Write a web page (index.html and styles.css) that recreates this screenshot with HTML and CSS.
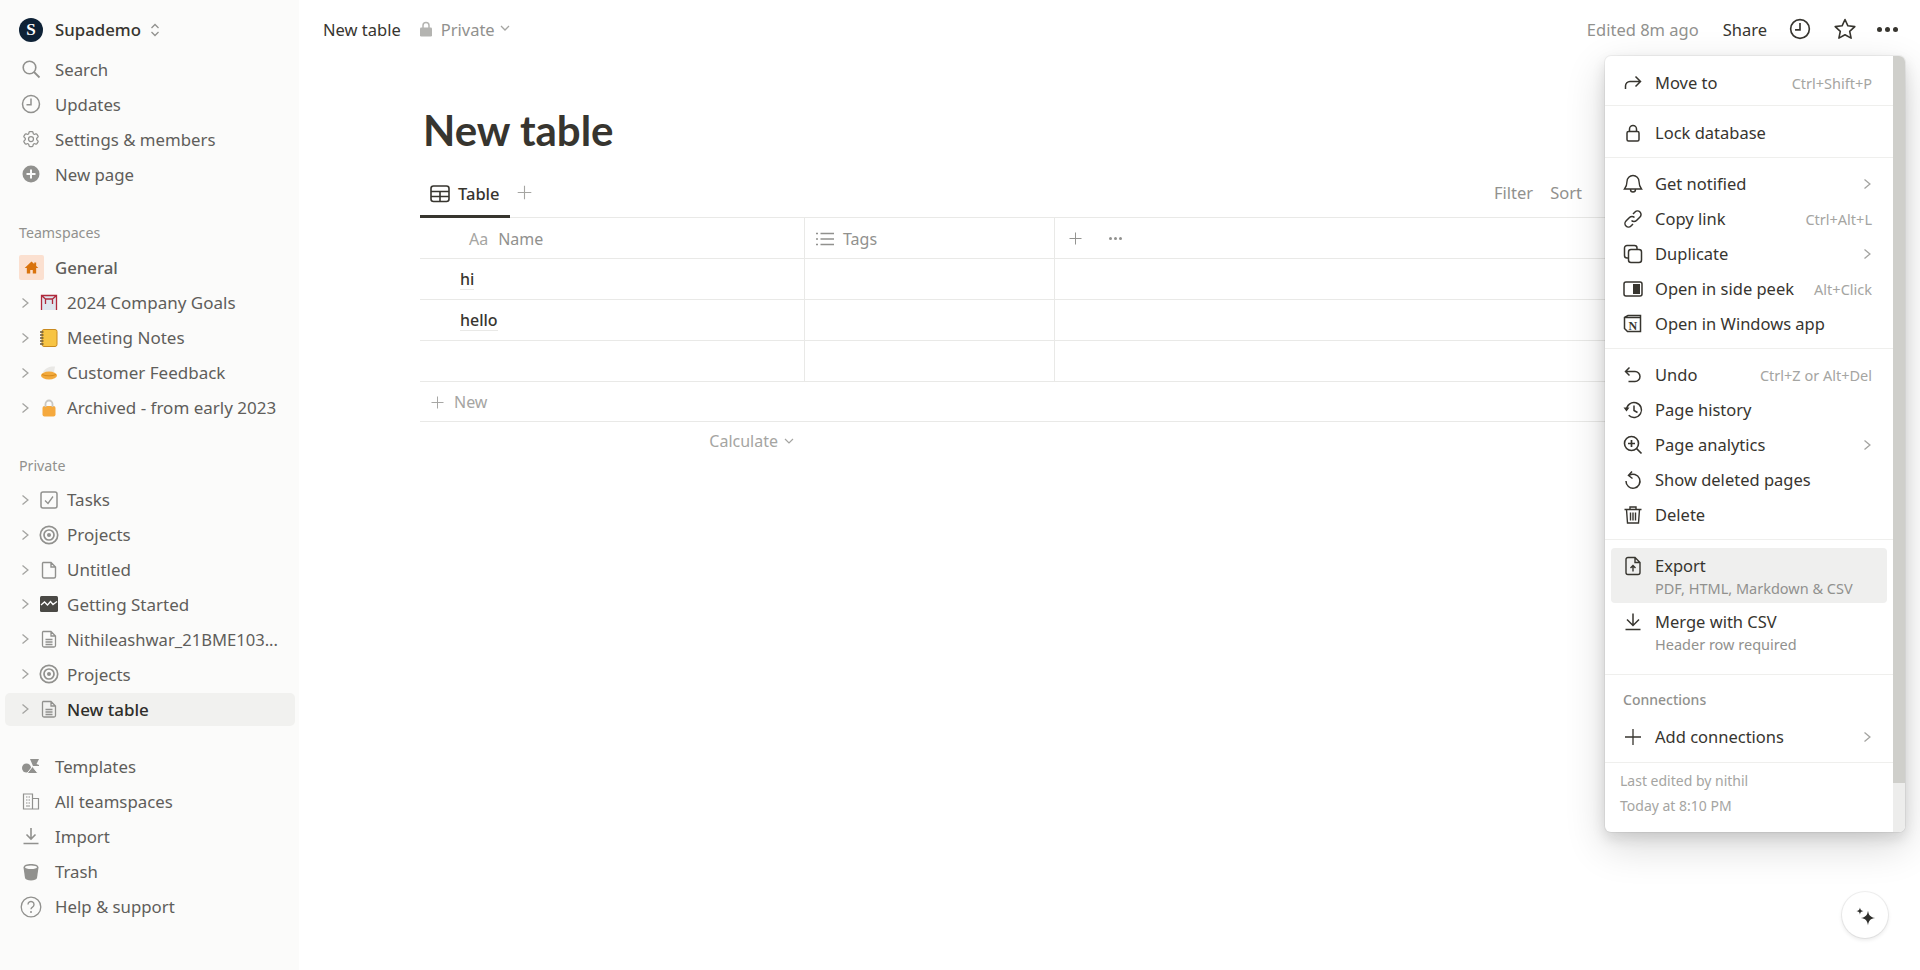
FILE: index.html
```html
<!DOCTYPE html>
<html lang="en">
<head>
<meta charset="utf-8">
<title>New table</title>
<link rel="stylesheet" href="styles.css">
</head>
<body>
<svg class="defs" width="0" height="0" aria-hidden="true">
  <symbol id="chev" viewBox="0 0 12 16"><path d="M3 2.500 9.500 8 3 13.500" fill="none" stroke="currentColor" stroke-width="1.600"/></symbol>
  <symbol id="doc" viewBox="0 0 20 20"><path d="M4 2.500h8l4.500 4.500v9.500a1.500 1.500 0 0 1-1.500 1.500H5a1.500 1.500 0 0 1-1.500-1.500V3.500a1 1 0 0 1 .5-1Zm8 0V7h4.500" fill="none" stroke="currentColor" stroke-width="1.400"/></symbol>
  <symbol id="doclines" viewBox="0 0 20 20"><path d="M4 2.500h8l4.500 4.500v9.500a1.500 1.500 0 0 1-1.500 1.500H5a1.500 1.500 0 0 1-1.500-1.500V3.500a1 1 0 0 1 .5-1Zm8 0V7h4.500M6.500 10.500h7M6.500 13h7M6.500 15.500h7" fill="none" stroke="currentColor" stroke-width="1.300"/></symbol>
  <symbol id="target" viewBox="0 0 20 20"><circle cx="10" cy="10" r="8.700" fill="none" stroke="currentColor" stroke-width="1.700"/><circle cx="10" cy="10" r="5" fill="none" stroke="currentColor" stroke-width="1.700"/><circle cx="10" cy="10" r="2"  fill="currentColor"/></symbol>
  <symbol id="clock" viewBox="0 0 20 20"><circle cx="10" cy="10" r="8.500" fill="none" stroke="currentColor" stroke-width="1.500"/><path d="M10 4.500V10.800H5.500" fill="none" stroke="currentColor" stroke-width="1.500"/></symbol>
  <symbol id="plus" viewBox="0 0 20 20"><path d="M10 2v16M2 10h16" fill="none" stroke="currentColor" stroke-width="1.300"/></symbol>
</svg>

<div class="app">
  <aside class="sidebar">
    <div class="workspace">
      <span class="avatar">S</span>
      <span class="workspace-name">Supademo</span>
      <svg class="updown" viewBox="0 0 10 16"><path d="M1.500 6 5 2.500 8.500 6M1.500 10 5 13.500 8.500 10" fill="none" stroke="currentColor" stroke-width="1.300"/></svg>
    </div>
    <nav class="nav">
      <div class="row"><svg class="ico" viewBox="0 0 20 20"><circle cx="8.500" cy="8.500" r="6.300" fill="none" stroke="currentColor" stroke-width="1.600"/><path d="m13 13 5.500 5.500" stroke="currentColor" stroke-width="1.800"/></svg><span>Search</span></div>
      <div class="row"><svg class="ico"><use href="#clock"/></svg><span>Updates</span></div>
      <div class="row"><svg class="ico" viewBox="0 0 24 24"><path fill="none" stroke="currentColor" stroke-width="1.500" d="M9.594 3.940c.09-.542.56-.94 1.110-.94h2.593c.55 0 1.020.398 1.110.94l.213 1.281c.063.374.313.686.645.870.074.040.147.083.220.127.325.196.720.257 1.075.124l1.217-.456a1.125 1.125 0 0 1 1.370.490l1.296 2.247a1.125 1.125 0 0 1-.260 1.431l-1.003.827c-.293.241-.438.613-.430.992a7.723 7.723 0 0 1 0 .255c-.008.378.137.750.430.991l1.004.827c.424.350.534.955.260 1.430l-1.298 2.247a1.125 1.125 0 0 1-1.369.491l-1.217-.456c-.355-.133-.750-.072-1.076.124a6.470 6.470 0 0 1-.220.128c-.331.183-.581.495-.644.869l-.213 1.281c-.09.543-.56.940-1.110.940h-2.594c-.55 0-1.019-.398-1.110-.940l-.213-1.281c-.062-.374-.312-.686-.644-.870a6.520 6.520 0 0 1-.220-.127c-.325-.196-.720-.257-1.076-.124l-1.217.456a1.125 1.125 0 0 1-1.369-.490l-1.297-2.247a1.125 1.125 0 0 1 .260-1.431l1.004-.827c.292-.240.437-.613.430-.991a6.932 6.932 0 0 1 0-.255c.007-.380-.138-.751-.430-.992l-1.004-.827a1.125 1.125 0 0 1-.260-1.430l1.297-2.247a1.125 1.125 0 0 1 1.370-.491l1.216.456c.356.133.751.072 1.076-.124.072-.044.146-.086.220-.128.332-.183.582-.495.644-.869l.214-1.280Z"/><circle cx="12" cy="12" r="3" fill="none" stroke="currentColor" stroke-width="1.500"/></svg><span>Settings &amp; members</span></div>
      <div class="row"><svg class="ico" viewBox="0 0 20 20"><circle cx="10" cy="10" r="8.500" fill="currentColor"/><path d="M10 5.500v9M5.500 10h9" stroke="#fbfbfa" stroke-width="2"/></svg><span>New page</span></div>
    </nav>

    <div class="label label-team">Teamspaces</div>
    <nav class="nav">
      <div class="row row-strong"><span class="home"><svg viewBox="0 0 20 20"><path d="M10 3 2 10.500h2.500V17h4v-4h3v4h4v-6.500H18l-2.500-2.400V4h-2.300v1.900Z" fill="#d9730d"/></svg></span><span>General</span></div>
      <div class="row tree"><svg class="chev"><use href="#chev"/></svg><svg class="tico" viewBox="0 0 20 20"><path d="M3 3h14v14H3z" fill="#dfe6ee"/><path d="M2.500 17V2.500h15V17M2.500 2.500l4 3.500h7l4-3.500M6.500 6v5M13.500 6v5" fill="none" stroke="#b02a3c" stroke-width="1.300"/></svg><span>2024 Company Goals</span></div>
      <div class="row tree"><svg class="chev"><use href="#chev"/></svg><svg class="tico" viewBox="0 0 20 20"><rect x="3" y="1.500" width="15" height="17" rx="2" fill="#f7c443" stroke="#c98a1f"/><path d="M1 4h3.500M1 7h3.500M1 10h3.500M1 13h3.500M1 16h3.500" stroke="#6b5a3a" stroke-width="1.300"/></svg><span>Meeting Notes</span></div>
      <div class="row tree"><svg class="chev"><use href="#chev"/></svg><svg class="tico" viewBox="0 0 20 20"><path d="M4 9c2-4 7-6 12-5.500L15 9Z" fill="#e9e8e5"/><ellipse cx="10" cy="12.500" rx="8" ry="4" fill="#f2a93b"/><path d="M3 11.500c3 1.800 11 1.800 14 0" fill="none" stroke="#d68a1d"/></svg><span>Customer Feedback</span></div>
      <div class="row tree"><svg class="chev"><use href="#chev"/></svg><svg class="tico" viewBox="0 0 20 20"><rect x="3.500" y="8" width="13" height="10.500" rx="2" fill="#f5a93d"/><path d="M6.500 9V6a3.500 3.500 0 0 1 7 0v3" fill="none" stroke="#c9c7c2" stroke-width="1.800"/></svg><span class="trunc">Archived - from early 2023</span></div>
    </nav>

    <div class="label label-private">Private</div>
    <nav class="nav nav-private">
      <div class="row tree"><svg class="chev"><use href="#chev"/></svg><svg class="tico" viewBox="0 0 20 20"><rect x="2" y="2" width="16" height="16" rx="2" fill="none" stroke="currentColor" stroke-width="1.500"/><path d="m6 10.500 3 3 5-7" fill="none" stroke="currentColor" stroke-width="1.300"/></svg><span>Tasks</span></div>
      <div class="row tree"><svg class="chev"><use href="#chev"/></svg><svg class="tico"><use href="#target"/></svg><span>Projects</span></div>
      <div class="row tree"><svg class="chev"><use href="#chev"/></svg><svg class="tico"><use href="#doc"/></svg><span>Untitled</span></div>
      <div class="row tree"><svg class="chev"><use href="#chev"/></svg><svg class="tico" viewBox="0 0 20 20"><rect x="1" y="2" width="18" height="16" rx="1.500" fill="#4a4945"/><path d="m2 11 3.500-3 3 3 3-3.500 2.500 3 4-3" fill="none" stroke="#fff" stroke-width="1.300"/></svg><span>Getting Started</span></div>
      <div class="row tree"><svg class="chev"><use href="#chev"/></svg><svg class="tico"><use href="#doclines"/></svg><span class="trunc name-long">Nithileashwar_21BME103...</span></div>
      <div class="row tree"><svg class="chev"><use href="#chev"/></svg><svg class="tico"><use href="#target"/></svg><span>Projects</span></div>
      <div class="row tree row-active"><svg class="chev"><use href="#chev"/></svg><svg class="tico"><use href="#doclines"/></svg><span>New table</span></div>
    </nav>

    <nav class="nav nav-bottom">
      <div class="row"><svg class="ico" viewBox="0 0 20 20"><circle cx="5.500" cy="12" r="4.500" fill="currentColor"/><path d="M9 3h9l-2.500 5 2.500 1v1h-6z" fill="currentColor"/><path d="m6 17.500 5.500-7 5.500 7z" fill="currentColor" stroke="#fbfbfa"/></svg><span>Templates</span></div>
      <div class="row"><svg class="ico" viewBox="0 0 20 20"><path d="M2.500 3h9v15h-9zM11.500 7.500h6V18h-6M5 6h1.500M7.500 6H9M5 9h1.500M7.500 9H9M5 12h1.500M7.500 12H9M5 15h4" fill="none" stroke="currentColor" stroke-width="1.200"/></svg><span>All teamspaces</span></div>
      <div class="row"><svg class="ico" viewBox="0 0 20 20"><path d="M10 2v11M5.500 8.500 10 13l4.500-4.500M2.500 17.500h15" fill="none" stroke="currentColor" stroke-width="1.600"/></svg><span>Import</span></div>
      <div class="row"><svg class="ico" viewBox="0 0 20 20"><path d="M2.500 5.500C2.500 3 6 2 10 2s7.500 1 7.500 3.500L16 16c-.3 1.500-3 2.500-6 2.500S4.300 17.500 4 16Z" fill="currentColor"/><ellipse cx="10" cy="5.300" rx="6" ry="1.800" fill="#fbfbfa"/></svg><span>Trash</span></div>
      <div class="row"><svg class="ico ico-help" viewBox="0 0 22 22"><circle cx="11" cy="11" r="9.800" fill="none" stroke="currentColor" stroke-width="1.300"/><path d="M8 8.500a3 3 0 1 1 4.500 2.600c-1 .6-1.500 1-1.500 2.200" fill="none" stroke="currentColor" stroke-width="1.400"/><circle cx="11" cy="16" r="1" fill="currentColor"/></svg><span>Help &amp; support</span></div>
    </nav>
  </aside>

  <main class="main">
    <header class="topbar">
      <span class="crumb">New table</span>
      <svg class="lock" viewBox="0 0 12 16"><path d="M3 7V4.500a3 3 0 0 1 6 0V7" fill="none" stroke="currentColor" stroke-width="1.500"/><rect y="6.500" width="12" height="9" rx="1.300" fill="currentColor"/></svg>
      <span class="private">Private</span>
      <svg class="down" viewBox="0 0 10 6"><path d="M1 1l4 4 4-4" fill="none" stroke="currentColor" stroke-width="1.300"/></svg>
      <span class="edited">Edited 8m ago</span>
      <span class="share">Share</span>
      <svg class="top-ico"><use href="#clock"/></svg>
      <svg class="top-ico star" viewBox="0 0 24 24"><path d="m12 2.500 2.900 6.300 6.900.8-5.100 4.700 1.400 6.800-6.100-3.400-6.100 3.400 1.400-6.800L2.200 9.600l6.900-.8Z" fill="none" stroke="currentColor" stroke-width="1.600" stroke-linejoin="round"/></svg>
      <span class="dots"><i></i><i></i><i></i></span>
    </header>

    <section class="page">
      <h1 class="title">New table</h1>
      <div class="views">
        <div class="tab">
          <svg class="tab-ico" viewBox="0 0 20 18"><rect x="1" y="1" width="18" height="15.500" rx="2.500" fill="none" stroke="currentColor" stroke-width="1.600"/><path d="M1 6.500h18M1 11.500h18M10 6.500v10" stroke="currentColor" stroke-width="1.600"/></svg>
          <span>Table</span>
        </div>
        <svg class="tab-plus"><use href="#plus"/></svg>
        <div class="actions">
          <span>Filter</span>
          <span>Sort</span>
          <svg class="act-ico" viewBox="0 0 16 20"><path d="M8 3 3 17h10z" fill="currentColor"/></svg>
        </div>
      </div>

      <div class="table">
        <div class="tr tr-head">
          <div class="td td-name"><span class="aa">Aa</span><span>Name</span></div>
          <div class="td td-tags"><svg class="list-ico" viewBox="0 0 20 16"><path d="M5.500 2.500H19M5.500 8H19M5.500 13.500H19" stroke="currentColor" stroke-width="1.300"/><path d="M1 2.500h2M1 8h2M1 13.500h2" stroke="currentColor" stroke-width="1.500"/></svg><span>Tags</span></div>
          <div class="td td-add"><svg class="add-plus"><use href="#plus"/></svg><span class="dots dots-small"><i></i><i></i><i></i></span></div>
        </div>
        <div class="tr"><div class="td td-cell"><span class="cell-text">hi</span></div><div class="td"></div><div class="td td-last"></div></div>
        <div class="tr"><div class="td td-cell"><span class="cell-text">hello</span></div><div class="td"></div><div class="td td-last"></div></div>
        <div class="tr"><div class="td"></div><div class="td"></div><div class="td td-last"></div></div>
        <div class="new-row"><svg class="new-plus"><use href="#plus"/></svg><span>New</span></div>
        <div class="calc"><span>Calculate</span><svg class="down" viewBox="0 0 10 6"><path d="M1 1l4 4 4-4" fill="none" stroke="currentColor" stroke-width="1.200"/></svg></div>
      </div>
    </section>
  </main>
</div>

<div class="menu">
  <div class="menu-body">
    <div class="group g-move">
      <div class="item"><svg class="m-ico" viewBox="0 0 20 20"><path d="M2.500 16v-3a4.500 4.500 0 0 1 4.500-4.500h10.500M12.500 3.500l5 5-5 5" fill="none" stroke="currentColor" stroke-width="1.500"/></svg><span class="m-text">Move to</span><span class="kbd">Ctrl+Shift+P</span></div>
    </div>
    <div class="group g-lock">
      <div class="item"><svg class="m-ico" viewBox="0 0 20 20"><rect x="4" y="8.500" width="12" height="9.500" rx="1.500" fill="none" stroke="currentColor" stroke-width="1.500"/><path d="M6.500 8.500V6a3.500 3.500 0 0 1 7 0v2.500" fill="none" stroke="currentColor" stroke-width="1.500"/></svg><span class="m-text">Lock database</span></div>
    </div>
    <div class="group">
      <div class="item"><svg class="m-ico" viewBox="0 0 20 20"><path d="M10 1.500a6 6 0 0 0-6 6c0 4-1 5.500-2.500 7.500h17C17 13 16 11.500 16 7.500a6 6 0 0 0-6-6ZM7.500 15.500a2.500 2.500 0 0 0 5 0" fill="none" stroke="currentColor" stroke-width="1.400"/></svg><span class="m-text">Get notified</span><svg class="m-chev"><use href="#chev"/></svg></div>
      <div class="item"><svg class="m-ico" viewBox="0 0 20 20"><path d="M8.500 11.500a3.500 3.500 0 0 0 5 0l3.500-3.500a3.500 3.500 0 0 0-5-5l-2 2M11.500 8.500a3.500 3.500 0 0 0-5 0L3 12a3.500 3.500 0 0 0 5 5l2-2" fill="none" stroke="currentColor" stroke-width="1.500"/></svg><span class="m-text">Copy link</span><span class="kbd">Ctrl+Alt+L</span></div>
      <div class="item"><svg class="m-ico" viewBox="0 0 20 20"><rect x="5.500" y="5.500" width="13" height="13" rx="2.500" fill="none" stroke="currentColor" stroke-width="1.500"/><path d="M5.500 14H4a2.500 2.500 0 0 1-2.500-2.500V4A2.500 2.500 0 0 1 4 1.500h7.500A2.500 2.500 0 0 1 14 4v1.500" fill="none" stroke="currentColor" stroke-width="1.500"/></svg><span class="m-text">Duplicate</span><svg class="m-chev"><use href="#chev"/></svg></div>
      <div class="item"><svg class="m-ico" viewBox="0 0 20 20"><rect x="1" y="3" width="18" height="14" rx="2" fill="none" stroke="currentColor" stroke-width="1.500"/><rect x="10" y="5" width="7" height="10" fill="currentColor"/></svg><span class="m-text">Open in side peek</span><span class="kbd">Alt+Click</span></div>
      <div class="item"><svg class="m-ico" viewBox="0 0 20 20"><path d="M1.500 3.500 5 1.500h12.500v16H4.500l-3-3Z" fill="none" stroke="currentColor" stroke-width="1.500"/><path d="M2 3.500h15.500" stroke="currentColor" stroke-width="1.500"/><text x="5.500" y="15.500" class="n-glyph">N</text></svg><span class="m-text">Open in Windows app</span></div>
    </div>
    <div class="group">
      <div class="item"><svg class="m-ico" viewBox="0 0 20 20"><path d="M6.500 2.500 2.500 6.500l4 4M2.500 6.500H12a5 5 0 0 1 0 10H5.500" fill="none" stroke="currentColor" stroke-width="1.500"/></svg><span class="m-text">Undo</span><span class="kbd">Ctrl+Z or Alt+Del</span></div>
      <div class="item"><svg class="m-ico" viewBox="0 0 20 20"><path d="M3.500 10a7.500 7.500 0 1 1 2.200 5.300" fill="none" stroke="currentColor" stroke-width="1.500"/><path d="M.5 7.500h6L3.500 11.500Z" fill="currentColor"/><path d="M11 5.500V10.500l3.500 2" fill="none" stroke="currentColor" stroke-width="1.500"/></svg><span class="m-text">Page history</span></div>
      <div class="item"><svg class="m-ico" viewBox="0 0 20 20"><circle cx="8.500" cy="8.500" r="7" fill="none" stroke="currentColor" stroke-width="1.600"/><path d="m13.500 13.500 5 5M8.500 5v7M5 8.500h7" fill="none" stroke="currentColor" stroke-width="1.700"/></svg><span class="m-text">Page analytics</span><svg class="m-chev"><use href="#chev"/></svg></div>
      <div class="item"><svg class="m-ico" viewBox="0 0 20 20"><path d="M6 5.500a7 7 0 1 1-3 5.500" fill="none" stroke="currentColor" stroke-width="1.500"/><path d="M9 1.500 5.500 5.500 9.500 8.500" fill="none" stroke="currentColor" stroke-width="1.500"/></svg><span class="m-text">Show deleted pages</span></div>
      <div class="item"><svg class="m-ico" viewBox="0 0 20 20"><path d="M1.500 4.500h17M7 4.500V2h6v2.500M3.500 4.500l1 13.500h11l1-13.500M7.500 7.500v8M10 7.500v8M12.500 7.500v8" fill="none" stroke="currentColor" stroke-width="1.400"/></svg><span class="m-text">Delete</span></div>
    </div>
    <div class="group g-export">
      <div class="item-two item-hover"><svg class="m-ico" viewBox="0 0 20 20"><path d="M5 1.500h7l5 5v10a2 2 0 0 1-2 2H5a2 2 0 0 1-2-2v-13a2 2 0 0 1 2-2ZM12 1.500v5h5M10 15.500v-6M7.500 12 10 9.500l2.500 2.500" fill="none" stroke="currentColor" stroke-width="1.400"/></svg><div class="two-text"><span class="m-text">Export</span><span class="sub">PDF, HTML, Markdown &amp; CSV</span></div></div>
      <div class="item-two"><svg class="m-ico" viewBox="0 0 20 20"><path d="M10 1.500V13M4 7.500 10 13.500l6-6M2.500 17.500h15" fill="none" stroke="currentColor" stroke-width="1.500"/></svg><div class="two-text"><span class="m-text">Merge with CSV</span><span class="sub">Header row required</span></div></div>
    </div>
    <div class="group g-conn">
      <div class="m-label">Connections</div>
      <div class="item"><svg class="m-ico"><use href="#plus"/></svg><span class="m-text">Add connections</span><svg class="m-chev"><use href="#chev"/></svg></div>
    </div>
    <div class="footer">
      <div>Last edited by nithil</div>
      <div>Today at 8:10 PM</div>
    </div>
  </div>
  <div class="scrollbar"><div class="thumb"></div></div>
</div>

<button class="assist" type="button" aria-label="AI"><svg viewBox="0 0 20 20"><path d="M12.500 6.500c.6 3.900 2.100 5.400 6 6-3.900.6-5.400 2.100-6 6-.6-3.900-2.100-5.400-6-6 3.900-.6 5.400-2.100 6-6Z" fill="#2f2f2c"/><path d="M5.800 3.700c.3 2 1 2.700 3 3-2 .3-2.700 1-3 3-.3-2-1-2.700-3-3 2-.3 2.700-1 3-3Z" fill="#2f2f2c"/></svg></button>
</body>
</html>
```

FILE: styles.css
```css
* { box-sizing: border-box; }
html, body { margin: 0; height: 100%; overflow: hidden; }
body { font-family: "Noto Sans", "Open Sans", sans-serif; font-size: 16.500px; color: #37352f; background: #fff; }
.defs { position: absolute; }
.app { display: flex; height: 970px; }

/* sidebar */
.sidebar { width: 299px; flex: none; background: #fbfbfa; padding: 12px 4px 0 5px; color: #5f5e5b; font-size: 16.800px; }
.workspace { display: flex; align-items: center; height: 35px; padding-left: 14px; margin-bottom: 4.500px; color: #37352f; }
.avatar { width: 24px; height: 24px; border-radius: 50%; background: #0e2236; color: #fff; font: 700 17px/24px "Liberation Serif", serif; text-align: center; flex: none; }
.workspace-name { margin-left: 12px; font-weight: 500; }
.updown { width: 10px; height: 16px; margin-left: 9px; color: #91918e; }
.nav { display: flex; flex-direction: column; }
.row { display: flex; align-items: center; height: 35.100px; padding-left: 16px; white-space: nowrap; }
.row > span:last-child { margin-left: 14px; }
.ico { width: 20px; height: 20px; flex: none; color: #91918e; overflow: visible; }
.ico-help { width: 22px; height: 22px; margin-left: -1px; margin-right: -1px; }
.row-strong { padding-left: 14px; }
.row-strong > span:last-child { margin-left: 11px; font-weight: 500; }
.home { width: 25px; height: 25px; border-radius: 2px; background: #fbe0d0; display: flex; align-items: center; justify-content: center; margin: 0; }
.home svg { width: 17px; height: 17px; }
.label { font-size: 14.200px; color: #91918e; padding-left: 14px; height: 20px; line-height: 20px; }
.label-team { margin-top: 31px; margin-bottom: 7px; }
.label-private { margin-top: 31px; margin-bottom: 6px; }
.tree { padding-left: 15px; font-size: 17px; }
.tree > span:last-child { margin-left: 8px; }
.nav-private .row { height: 34.900px; }
.name-long { font-size: 16.600px; }
.chev { width: 10px; height: 14px; color: #a5a5a2; flex: none; }
.tico { width: 20px; height: 20px; margin-left: 9px; flex: none; color: #91918e; overflow: visible; }
.nav-private .row-active { height: 33px; margin: 1px 0; background: #f1f1ef; border-radius: 5px; color: #2f2e2a; font-weight: 500; }
.nav-bottom { margin-top: 22px; }
.trunc { overflow: hidden; text-overflow: clip; }

/* main */
.main { flex: 1; min-width: 0; display: flex; flex-direction: column; }
.topbar { height: 58px; display: flex; align-items: center; padding: 0 22px 0 24px; }
.crumb { color: #37352f; }
.lock { width: 12px; height: 16px; color: #b4b4b1; margin-left: 19px; }
.private { margin-left: 9px; color: #91918e; }
.topbar .down { width: 10px; height: 6px; margin-left: 5px; margin-top: -3px; color: #a5a5a2; }
.edited { margin-left: auto; color: #91918e; }
.share { margin-left: 24px; color: #37352f; }
.top-ico { width: 22px; height: 22px; margin-left: 22px; color: #37352f; }
.star { margin-left: 22px; width: 24px; height: 24px; }
.dots { display: inline-flex; gap: 3px; margin-left: 20px; }
.dots i { width: 5px; height: 5px; border-radius: 50%; background: #37352f; }
.dots-small { gap: 2px; margin-left: 26px; }
.dots-small i { width: 3px; height: 3px; background: #91918e; }

.page { padding: 48px 60px 0 121px; }
.title { margin: 0; font: 700 42px/48px Lato, sans-serif; color: #37352f; padding-left: 3px; }
.views { display: flex; align-items: flex-end; padding-top: 20px; }
.tab { display: flex; align-items: center; height: 44px; padding: 0 10px 2px; border-bottom: 3px solid #37352f; font-weight: 500; gap: 8px; margin-bottom: -1px; }
.tab-ico { width: 20px; height: 18px; color: #37352f; }
.tab-plus { width: 17px; height: 17px; color: #a5a5a2; margin: 0 0 16px 6px; }
.actions { margin: 0 242px 13px auto; display: flex; align-items: center; gap: 17px; color: #91918e; }
.act-ico { width: 16px; height: 20px; margin-left: 3px; }

.table { border-top: 1px solid #e9e9e7; font-size: 16px; }
.tr { display: grid; grid-template-columns: 385px 250px 1fr; height: 41px; border-bottom: 1px solid #e9e9e7; }
.tr-head .td { padding-top: 1px; }
.td { display: flex; align-items: center; border-right: 1px solid #e9e9e7; color: #91918e; }
.td-last, .td-add { border-right: 0; }
.td-name { padding-left: 49px; gap: 10px; }
.aa { color: #a5a5a2; }
.td-tags { padding-left: 10px; gap: 8px; }
.list-ico { width: 20px; height: 16px; }
.td-add { padding-left: 13px; }
.add-plus { width: 15px; height: 15px; color: #91918e; }
.td-cell { padding-left: 40px; color: #37352f; font-weight: 500; }
.cell-text { border-bottom: 1px solid #e9e9e7; line-height: 20px; }
.new-row { display: flex; align-items: center; height: 40px; padding: 1px 0 0 10px; gap: 9px; color: #a5a5a2; border-bottom: 1px solid #e9e9e7; }
.new-plus { width: 15px; height: 15px; }
.calc { width: 385px; height: 38px; display: flex; align-items: center; justify-content: flex-end; gap: 6px; padding-right: 11px; color: #a5a5a2; }
.calc .down { width: 10px; height: 6px; }

/* overlay menu */
.menu { position: absolute; left: 1605px; top: 56px; width: 300px; height: 776px; display: flex; background: #fff; border-radius: 6px; overflow: hidden; box-shadow: 0 0 0 1px rgba(15,15,15,.05), 0 6px 14px rgba(15,15,15,.12), 0 14px 40px rgba(15,15,15,.16); }
.menu-body { flex: 1; min-width: 0; display: flex; flex-direction: column; }
.scrollbar { width: 12px; flex: none; display: flex; flex-direction: column; background: #ededec; }
.thumb { height: 727px; background: #cfcfcb; }
.group { padding: 8px 0 7px; border-bottom: 1px solid #efefed; }
.g-move { padding: 9px 0 5px; }
.g-lock { padding: 9px 0 7px; }
.g-export { padding: 8px 0 14px; }
.g-conn { padding: 15px 0 8px; }
.item { display: flex; align-items: center; height: 35px; padding: 0 21px 0 18px; white-space: nowrap; }
.m-ico { width: 20px; height: 20px; flex: none; color: #37352f; overflow: visible; }
.m-text { margin-left: 12px; color: #37352f; }
.kbd { margin-left: auto; color: #a5a5a2; font-size: 14.500px; }
.m-chev { width: 10px; height: 14px; margin-left: auto; color: #a5a5a2; }
.n-glyph { font: 700 12px "Liberation Serif", serif; fill: currentColor; }
.item-two { display: flex; align-items: flex-start; height: 55px; margin: 0 6px 1px; padding: 8px 15px 0 12px; border-radius: 4px; }
.item-hover { background: #efefee; }
.two-text { display: flex; flex-direction: column; }
.two-text .m-text { line-height: 20px; }
.sub { margin-left: 12px; margin-top: 2px; font-size: 14.500px; line-height: 20px; color: #91918e; white-space: nowrap; }
.m-label { height: 20px; line-height: 20px; padding-left: 18px; font-size: 14px; font-weight: 500; color: #91918e; margin-bottom: 9px; }
.footer { padding: 5px 0 0 15px; font-size: 14px; line-height: 25px; color: #a5a5a2; }

.assist { position: absolute; left: 1842px; top: 892px; width: 46px; height: 46px; padding: 11px; border-radius: 50%; border: 0; background: #fff; box-shadow: 0 0 0 1px rgba(15,15,15,.06), 0 2px 4px rgba(15,15,15,.1); }
.assist svg { display: block; width: 24px; height: 24px; }
```
